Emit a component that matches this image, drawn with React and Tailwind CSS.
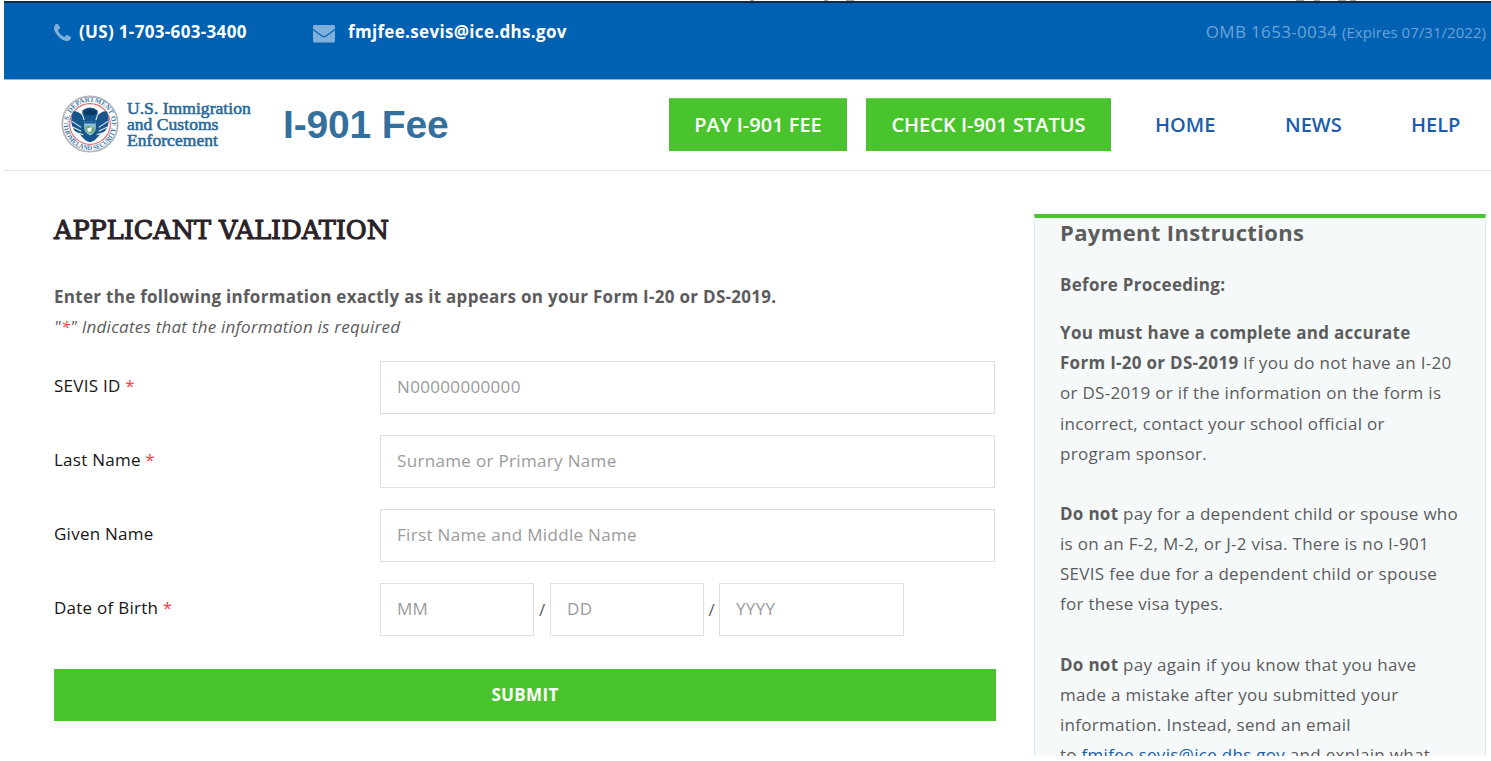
import React from "react";

function PhoneIcon() {
  return (
    <svg viewBox="0 0 1408 1408" className="ml-px mt-[21px] h-[17px] w-[17px] fill-[#80b0d9]">
      <path d="M1408 1112q0 27-10 70.5t-21 68.5q-21 50-122 106-94 51-186 51-27 0-53-3.5t-57.5-12.5-47-14.5-55.5-20.5-49-18q-98-35-175-83-127-79-264-216t-216-264q-48-77-83-175-3-9-18-49t-20.5-55.5-14.5-47-12.5-57.5-3.5-53q0-92 51-186 56-101 106-122 25-11 68.5-21t70.5-10q14 0 21 3 18 6 53 76 11 19 30 54t35 63.5 31 53.5q3 4 17.5 25t21.5 35.5 7 28.5q0 20-28.5 50t-62 55-62 53-28.5 46q0 9 5 22.5t8.5 20.5 14 24 11.5 19q76 137 174 235t235 174q2 1 19 11.5t24 14 20.5 8.5 22.5 5q18 0 46-28.5t53-62 55-62 50-28.5q14 0 28.5 7t35.5 21.5 25 17.5q25 15 53.5 31t63.5 35 54 30q70 35 76 53 3 7 3 21z" />
    </svg>
  );
}

function MailIcon() {
  return (
    <svg viewBox="0 0 22 18" className="ml-[67px] mt-[22px] h-[18px] w-[22px]">
      <rect width="22" height="17.5" rx="1.3" fill="#80b0d9" />
      <path d="M0 4.6 L9 10.9 Q11 12.2 13 10.9 L22 4.6" fill="none" stroke="#0061b3" strokeWidth="1.2" />
    </svg>
  );
}

function Seal() {
  return (
    <svg viewBox="0 0 60 60" className="h-[58px] w-[58px] shrink-0">
      <defs>
        <path id="arcTop" d="M8.2 34 A22.3 22.3 0 1 1 51.8 34" />
        <path id="arcBottom" d="M2.9 33 A27.3 27.3 0 0 0 57.1 33" />
      </defs>
      <circle cx="30" cy="30" r="28.7" fill="#fff" stroke="#b4b7ba" strokeWidth="1.8" />
      <text fontFamily="Liberation Serif" fontWeight="700" fontSize="7.2" fill="#3d7aa8">
        <textPath href="#arcTop" startOffset="0.5" textLength="77" lengthAdjust="spacingAndGlyphs">U.S. DEPARTMENT OF</textPath>
      </text>
      <text fontFamily="Liberation Serif" fontWeight="700" fontSize="7.2" fill="#3d7aa8">
        <textPath href="#arcBottom" startOffset="2" textLength="75" lengthAdjust="spacingAndGlyphs">HOMELAND SECURITY</textPath>
      </text>
      <circle cx="30" cy="30" r="21" fill="#fff" stroke="#e06a6e" strokeWidth="1.2" />
      <path d="M12.5 17 Q17 16 22 21 L22 16 Q30 10 38 16 L38 21 Q43 16 47.5 17 Q52 28 46 37 L40 41 Q36 47 30 49 Q24 47 20 41 L14 37 Q8 28 12.5 17Z" fill="#17568c" />
      <path d="M23 16.5 Q30 13 37 16.5 L35 21 H25Z" fill="#0a3a66" />
      <path d="M11 27 L21 33.5 M12 33 L21 37.5 M49 27 L39 33.5 M48 33 L39 37.5 M16 39 L23 41 M44 39 L37 41" stroke="#e4edf4" strokeWidth="1.1" />
      <path d="M22 20 L24 26 M38 20 L36 26" stroke="#dfeaf2" strokeWidth="1.2" />
      <path d="M24 27 H36 V35 Q35 40 30 42 Q25 40 24 35Z" fill="#8fc0dc" />
      <path d="M25 33 Q29 30 35 34 L34 38 Q30 41 26 38Z" fill="#6fae72" />
      <path d="M27 35 L32 33 L31 38 L28 38Z" fill="#fff" />
      <path d="M24 27 H36 V29.5 H24Z" fill="#1d5f95" />
    </svg>
  );
}

const input =
  "h-[53px] border border-[#dddfe6] bg-white px-4 pb-0.5 text-[17px] tracking-[0.33px] text-[#555] outline-none placeholder:text-[#9b9b9b] placeholder:opacity-100";

function Row({ label, required, children }) {
  return (
    <div className="flex h-[53px] items-start">
      <label className="w-[326px] pt-[13px] text-[17px] leading-6 tracking-[0.25px] text-[#161616]">
        {label} {required && <span className="text-[#ff3b3b]">*</span>}
      </label>
      {children}
    </div>
  );
}

function Header() {
  return (
    <>
      <div className="flex h-[79px] items-start border-b border-t-2 border-b-[#8cb9e2] border-t-[#0a2c3c] bg-[#0061b3] pl-[49px] pr-[5px] text-[17px] font-bold leading-6 tracking-[0.33px] text-white">
        <PhoneIcon />
        <span className="ml-2 mt-[17px] w-[167px] whitespace-nowrap">(US) 1-703-603-3400</span>
        <MailIcon />
        <span className="ml-[13px] mt-[17px] whitespace-nowrap">fmjfee.sevis@ice.dhs.gov</span>
        <span className="ml-auto mt-[17px] whitespace-nowrap font-normal text-[#6ba3d6]">
          OMB 1653-0034 <span className="text-[15px] tracking-[0.04px]">(Expires 07/31/2022)</span>
        </span>
      </div>
      <header className="flex h-[91px] items-start border-b border-[#e1e3e4] pt-[18px]">
        <div className="ml-[57px] -mt-[3px] flex">
          <Seal />
          <div className="ml-2 mt-[5px] w-[130px] whitespace-nowrap font-['Liberation_Serif'] text-[17.5px] leading-[16px] tracking-[0.05px] text-[#2a6a9b] [-webkit-text-stroke:0.6px_#2a6a9b]">
            U.S. Immigration
            <br />
            and Customs
            <br />
            Enforcement
          </div>
        </div>
        <div className="ml-[26px] mt-[2px] w-[169px] whitespace-nowrap font-['Liberation_Sans'] text-[39px] font-bold leading-[50px] tracking-[-0.15px] text-[#34709d]">
          I-901 Fee
        </div>
        <nav className="ml-[217px] flex h-[53px] items-center text-[20px] font-semibold text-[#1a5dab]">
          <a className="flex h-full w-[178px] items-center justify-center border-t border-[#6ccf50] bg-[#4ac42c] text-white">PAY I-901 FEE</a>
          <a className="ml-[19px] flex h-full w-[245px] items-center justify-center border-t border-[#6ccf50] bg-[#4ac42c] text-white">CHECK I-901 STATUS</a>
          <a className="ml-11 w-[130px]">HOME</a>
          <a className="w-[126px]">NEWS</a>
          <a>HELP</a>
        </nav>
      </header>
    </>
  );
}

export default function App() {
  return (
    <div className="h-[761px] w-[1491px] overflow-hidden bg-white pl-1 font-['Open_Sans',sans-serif] text-[#5c5c5c]">
      <div className="flex h-px">
        <i className="ml-[746px] w-1 bg-[#aaa]" />
        <i className="ml-[70px] w-1 bg-[#aaa]" />
        <i className="ml-[18px] w-2 bg-[#aaa]" />
        <i className="ml-[442px] w-2 bg-[#aaa]" />
        <i className="ml-2.5 w-1.5 bg-[#aaa]" />
        <i className="ml-[18px] w-2 bg-[#aaa]" />
        <i className="ml-1 w-1.5 bg-[#aaa]" />
      </div>
      <div className="h-[755px] overflow-hidden">
        <Header />
        <main className="flex pl-[50px] pt-[43px]">
          <section className="w-[943px]">
            <h1 className="pt-px whitespace-nowrap font-['DejaVu_Serif',serif] text-[25.5px] leading-[31px] text-[#2a2228] [-webkit-text-stroke:1.1px_#2a2228]">APPLICANT VALIDATION</h1>
            <p className="mt-[36px] text-[17px] font-bold leading-[30px] tracking-[0.29px]">Enter the following information exactly as it appears on your Form I-20 or DS-2019.</p>
            <p className="text-[17px] italic leading-[30px] tracking-[0.23px]">
              "<span className="text-[#ff3b3b]">*</span>" Indicates that the information is required
            </p>
            <form className="mt-[19px] flex flex-col gap-[21px]">
              <Row label="SEVIS ID" required>
                <input className={input + " w-[615px]"} placeholder="N00000000000" />
              </Row>
              <Row label="Last Name" required>
                <input className={input + " w-[615px]"} placeholder="Surname or Primary Name" />
              </Row>
              <Row label="Given Name">
                <input className={input + " w-[615px]"} placeholder="First Name and Middle Name" />
              </Row>
              <Row label="Date of Birth" required>
                <div className="flex items-center text-[17px]">
                  <input className={input + " w-[154px]"} placeholder="MM" />
                  <span className="w-4 text-center">/</span>
                  <input className={input + " w-[154px]"} placeholder="DD" />
                  <span className="w-[15px] text-center">/</span>
                  <input className={input + " w-[185px]"} placeholder="YYYY" />
                </div>
              </Row>
              <button type="button" className="mt-3 h-[52px] w-[942px] bg-[#4ac42c] text-[17px] font-bold tracking-[0.35px] text-white">SUBMIT</button>
            </form>
          </section>
          <aside className="ml-[37px] h-[700px] w-[452px] border-x border-t-4 border-x-[#dfe8ec] border-t-[#4ac42c] bg-[#f5f9fa] pl-[25px] text-[17px] leading-[30.15px] tracking-[0.29px]">
            <h2 className="text-[22px] font-bold leading-[28px] tracking-[0.36px]">Payment Instructions</h2>
            <p className="mt-[24px] font-bold">Before Proceeding:</p>
            <p className="mt-[18px] whitespace-nowrap">
              <b>You must have a complete and accurate</b>
              <br />
              <b>Form I-20 or DS-2019</b> If you do not have an I-20
              <br />
              or DS-2019 or if the information on the form is
              <br />
              incorrect, contact your school official or
              <br />
              program sponsor.
            </p>
            <p className="mt-[30px] whitespace-nowrap">
              <b>Do not</b> pay for a dependent child or spouse who
              <br />
              is on an F-2, M-2, or J-2 visa. There is no I-901
              <br />
              SEVIS fee due for a dependent child or spouse
              <br />
              for these visa types.
            </p>
            <p className="mt-[30px] whitespace-nowrap">
              <b>Do not</b> pay again if you know that you have
              <br />
              made a mistake after you submitted your
              <br />
              information. Instead, send an email
              <br />
              to <a className="text-[#1a5dab]">fmjfee.sevis@ice.dhs.gov</a> and explain what
            </p>
          </aside>
        </main>
      </div>
    </div>
  );
}
